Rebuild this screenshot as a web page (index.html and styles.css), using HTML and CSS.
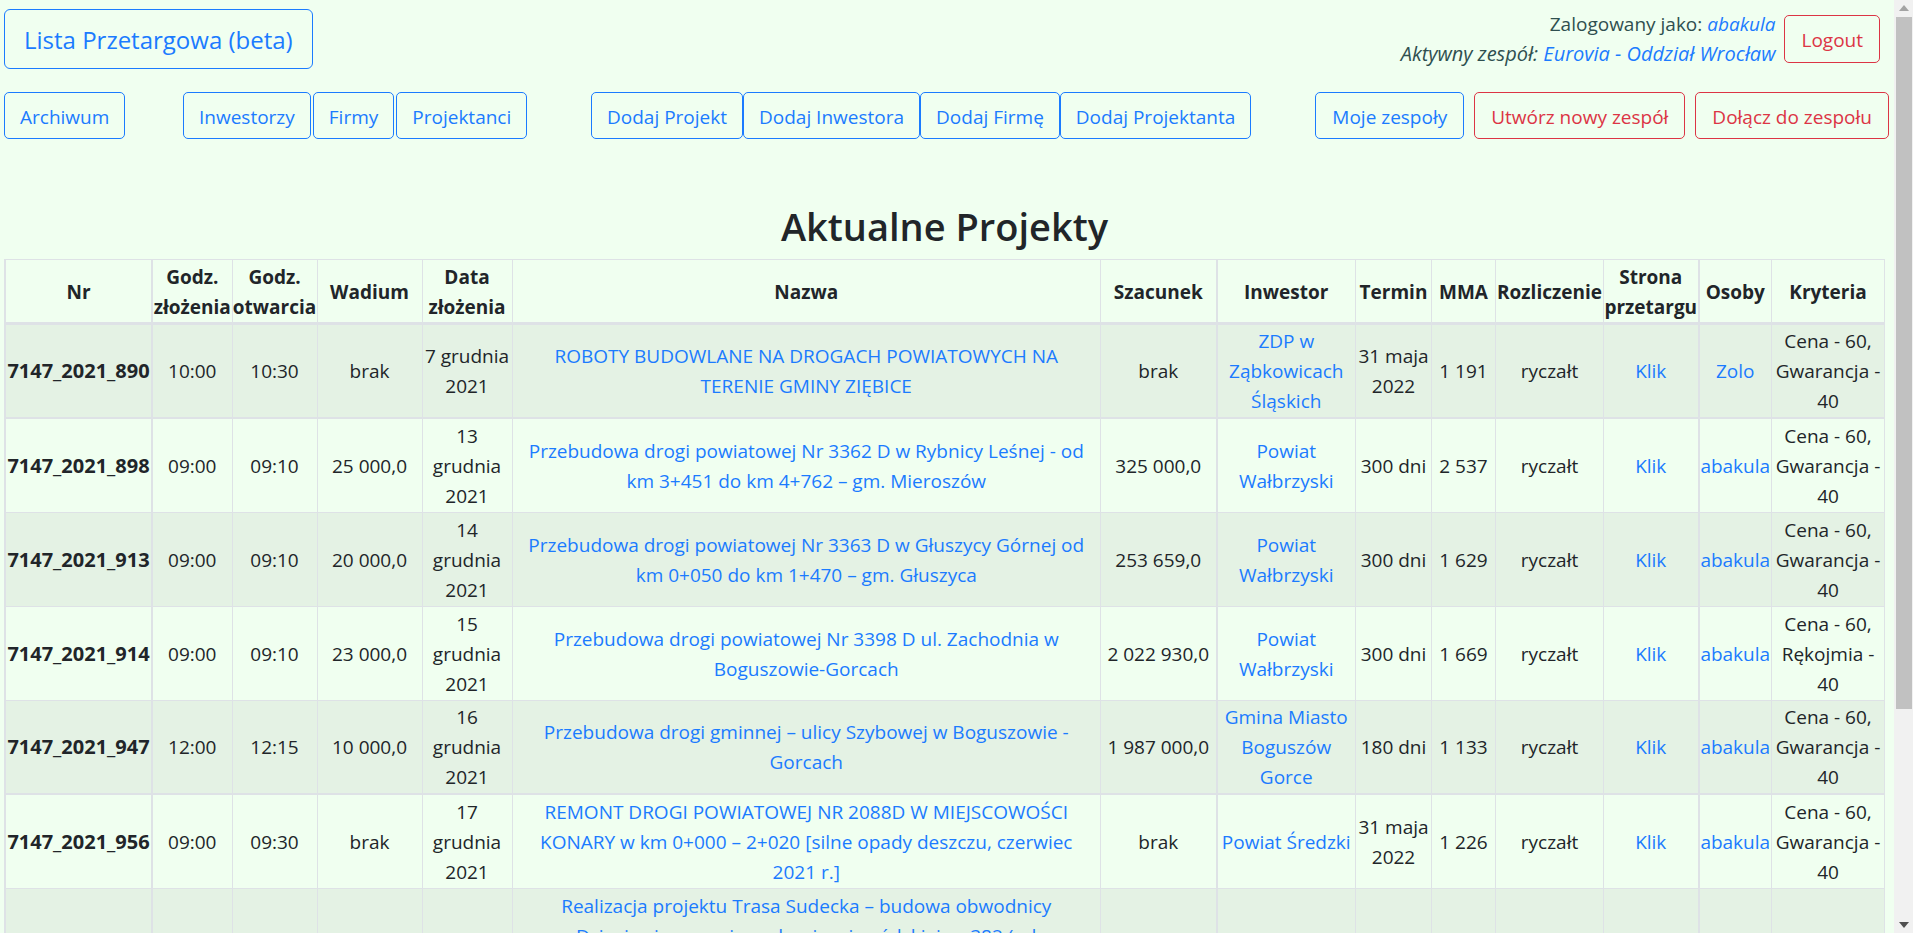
FILE: index.html
```html
<!DOCTYPE html>
<html lang="pl">
<head>
<meta charset="utf-8">
<title>Lista Przetargowa (beta)</title>
<link rel="stylesheet" href="styles.css">
</head>
<body>
<div class="page">
  <header class="top">
    <a class="btn btn-primary btn-lg" href="#">Lista Przetargowa (beta)</a>
    <div class="session">
      <div class="session-info">
        <div>Zalogowany jako: <em><a href="#">abakula</a></em></div>
        <div><em class="team">Aktywny zespół: <a href="#">Eurovia - Oddział Wrocław</a></em></div>
      </div>
      <a class="btn btn-danger" href="#">Logout</a>
    </div>
  </header>
  <nav class="menu">
    <div class="group"><a class="btn btn-primary" href="#">Archiwum</a></div>
    <div class="group group-lists">
      <a class="btn btn-primary" href="#">Inwestorzy</a>
      <a class="btn btn-primary" href="#">Firmy</a>
      <a class="btn btn-primary" href="#">Projektanci</a>
    </div>
    <div class="group">
      <a class="btn btn-primary" href="#">Dodaj Projekt</a>
      <a class="btn btn-primary" href="#">Dodaj Inwestora</a>
      <a class="btn btn-primary" href="#">Dodaj Firmę</a>
      <a class="btn btn-primary" href="#">Dodaj Projektanta</a>
    </div>
    <div class="group group-teams">
      <a class="btn btn-primary" href="#">Moje zespoły</a>
      <a class="btn btn-danger" href="#">Utwórz nowy zespół</a>
      <a class="btn btn-danger" href="#">Dołącz do zespołu</a>
    </div>
  </nav>
  <main class="content">
    <h1 class="title">Aktualne Projekty</h1>
    <table class="projects">
      <colgroup>
        <col class="c-nr"><col class="c-sub"><col class="c-open"><col class="c-dep"><col class="c-date"><col class="c-name"><col class="c-est"><col class="c-inv"><col class="c-term"><col class="c-mma"><col class="c-bill"><col class="c-site"><col class="c-who"><col class="c-crit">
      </colgroup>
      <thead>
        <tr><th>Nr</th><th>Godz. złożenia</th><th>Godz. otwarcia</th><th>Wadium</th><th>Data złożenia</th><th>Nazwa</th><th>Szacunek</th><th>Inwestor</th><th>Termin</th><th>MMA</th><th>Rozliczenie</th><th>Strona przetargu</th><th>Osoby</th><th>Kryteria</th></tr>
      </thead>
      <tbody>
        <tr><th>7147_2021_890</th><td>10:00</td><td>10:30</td><td>brak</td><td>7 grudnia 2021</td><td class="name"><a href="#">ROBOTY BUDOWLANE NA DROGACH POWIATOWYCH NA TERENIE GMINY ZIĘBICE</a></td><td>brak</td><td><a href="#">ZDP w Ząbkowicach Śląskich</a></td><td>31 maja 2022</td><td>1 191</td><td>ryczałt</td><td><a href="#">Klik</a></td><td><a href="#">Zolo</a></td><td>Cena - 60, Gwarancja - 40</td></tr>
        <tr><th>7147_2021_898</th><td>09:00</td><td>09:10</td><td>25 000,0</td><td>13 grudnia 2021</td><td class="name"><a href="#">Przebudowa drogi powiatowej Nr 3362 D w Rybnicy Leśnej - od km 3+451 do km 4+762 – gm. Mieroszów</a></td><td>325 000,0</td><td><a href="#">Powiat Wałbrzyski</a></td><td>300 dni</td><td>2 537</td><td>ryczałt</td><td><a href="#">Klik</a></td><td><a href="#">abakula</a></td><td>Cena - 60, Gwarancja - 40</td></tr>
        <tr><th>7147_2021_913</th><td>09:00</td><td>09:10</td><td>20 000,0</td><td>14 grudnia 2021</td><td class="name"><a href="#">Przebudowa drogi powiatowej Nr 3363 D w Głuszycy Górnej od km 0+050 do km 1+470 – gm. Głuszyca</a></td><td>253 659,0</td><td><a href="#">Powiat Wałbrzyski</a></td><td>300 dni</td><td>1 629</td><td>ryczałt</td><td><a href="#">Klik</a></td><td><a href="#">abakula</a></td><td>Cena - 60, Gwarancja - 40</td></tr>
        <tr><th>7147_2021_914</th><td>09:00</td><td>09:10</td><td>23 000,0</td><td>15 grudnia 2021</td><td class="name"><a href="#">Przebudowa drogi powiatowej Nr 3398 D ul. Zachodnia w Boguszowie-Gorcach</a></td><td>2 022 930,0</td><td><a href="#">Powiat Wałbrzyski</a></td><td>300 dni</td><td>1 669</td><td>ryczałt</td><td><a href="#">Klik</a></td><td><a href="#">abakula</a></td><td>Cena - 60, Rękojmia - 40</td></tr>
        <tr><th>7147_2021_947</th><td>12:00</td><td>12:15</td><td>10 000,0</td><td>16 grudnia 2021</td><td class="name"><a href="#">Przebudowa drogi gminnej – ulicy Szybowej w Boguszowie - Gorcach</a></td><td>1 987 000,0</td><td><a href="#">Gmina Miasto Boguszów Gorce</a></td><td>180 dni</td><td>1 133</td><td>ryczałt</td><td><a href="#">Klik</a></td><td><a href="#">abakula</a></td><td>Cena - 60, Gwarancja - 40</td></tr>
        <tr><th>7147_2021_956</th><td>09:00</td><td>09:30</td><td>brak</td><td>17 grudnia 2021</td><td class="name"><a href="#">REMONT DROGI POWIATOWEJ NR 2088D W MIEJSCOWOŚCI KONARY w km 0+000 – 2+020 [silne opady deszczu, czerwiec 2021 r.]</a></td><td>brak</td><td><a href="#">Powiat Średzki</a></td><td>31 maja 2022</td><td>1 226</td><td>ryczałt</td><td><a href="#">Klik</a></td><td><a href="#">abakula</a></td><td>Cena - 60, Gwarancja - 40</td></tr>
        <tr><th></th><td></td><td></td><td></td><td></td><td class="name"><a href="#">Realizacja projektu Trasa Sudecka – budowa obwodnicy<br>Dzierżoniowa w ciągu drogi wojewódzkiej nr 382 (od</a></td><td></td><td></td><td></td><td></td><td></td><td></td><td></td><td></td></tr>
      </tbody>
    </table>
  </main>
</div>
<div class="scrollbar" aria-hidden="true">
  <svg class="arrow" viewBox="0 0 19 17"><path d="M5 11h10l-5-6z" fill="#a3a3a3"/></svg>
  <div class="track"><div class="thumb"></div></div>
  <svg class="arrow" viewBox="0 0 19 17"><path d="M5 6h10l-5 6z" fill="#505050"/></svg>
</div>
</body>
</html>
```
FILE: styles.css
```css
* { box-sizing: border-box; }

body {
  margin: 0;
  height: 100vh;
  overflow: hidden;
  display: grid;
  grid-template-columns: minmax(0, 1fr) 19px;
  background: #f0fff0;
  color: #212529;
  font-family: "Open Sans", "Noto Sans", sans-serif;
  font-size: 19px;
  line-height: 30px;
}

a { color: #1b7bff; text-decoration: none; }

.page {
  min-height: 0;
  overflow: hidden;
  padding: 9px 5px 0 4px;
}

.btn {
  display: inline-block;
  border: 1px solid;
  border-radius: 5px;
  padding: 9px 15px 6px;
  white-space: nowrap;
}
.btn-primary { color: #1b7bff; border-color: #1b7bff; }
.btn-danger { color: #dc3545; border-color: #dc3545; }
.btn-lg {
  border-radius: 6px;
  padding: 11px 19px 9px;
  font-size: 24px;
  line-height: 38px;
}

.top {
  display: flex;
  justify-content: space-between;
  align-items: center;
}
.session {
  display: flex;
  align-items: center;
  gap: 9px;
  padding-right: 9px;
  color: #2f4f4f;
}
.session .btn { padding: 9px 16px 7px; }
.session-info { text-align: right; }
.team { font-size: 20px; }

.menu {
  display: grid;
  grid-template-columns: 179fr 408fr 723fr 575fr;
  margin-top: 23px;
}
.group { display: flex; }
.group-lists { gap: 2px; }
.group-teams { justify-content: flex-end; gap: 10px; }
.group-teams .btn { padding-left: 16px; padding-right: 16px; }

.content { padding: 63px 4px 0 0; }
.title {
  margin: 0 0 9px;
  text-align: center;
  font-size: 38px;
  font-weight: 600;
  line-height: 48px;
}

.projects {
  width: 100%;
  table-layout: fixed;
  border-collapse: collapse;
  text-align: center;
  border-left: 2px solid #dee2e6;
}
.projects th,
.projects td {
  border: 1px solid #dee2e6;
  padding: 2px 0 1px;
  vertical-align: middle;
}
.projects th:nth-child(1),
.projects td:nth-child(7),
.projects td:nth-child(12),
.projects th:nth-child(7),
.projects th:nth-child(12) { border-right-width: 2px; }
.projects thead th { border-bottom-width: 3px; padding: 2px 0 0; }
.projects tbody th { font-size: 20px; }
.projects tbody tr:nth-child(4n+1) > * { border-bottom-width: 2px; padding: 1px 0; }
.projects tbody tr:nth-child(n) > .name { padding-left: 10px; padding-right: 10px; }
.projects tbody tr:nth-child(odd) { background: #e4f2e4; }

.c-nr { width: 147px; }
.c-sub { width: 80px; }
.c-open { width: 85px; }
.c-dep { width: 105px; }
.c-date { width: 90px; }
.c-est { width: 116px; }
.c-inv { width: 139px; }
.c-term { width: 76px; }
.c-mma { width: 64px; }
.c-bill { width: 108px; }
.c-site { width: 95px; }
.c-who { width: 73px; }
.c-crit { width: 113px; }

.scrollbar {
  display: flex;
  flex-direction: column;
  background: #f1f1f1;
}
.arrow { width: 19px; height: 17px; }
.track { flex: 1; padding: 0 1px 0 2px; }
.thumb { height: 77%; background: #c1c1c1; }
```
